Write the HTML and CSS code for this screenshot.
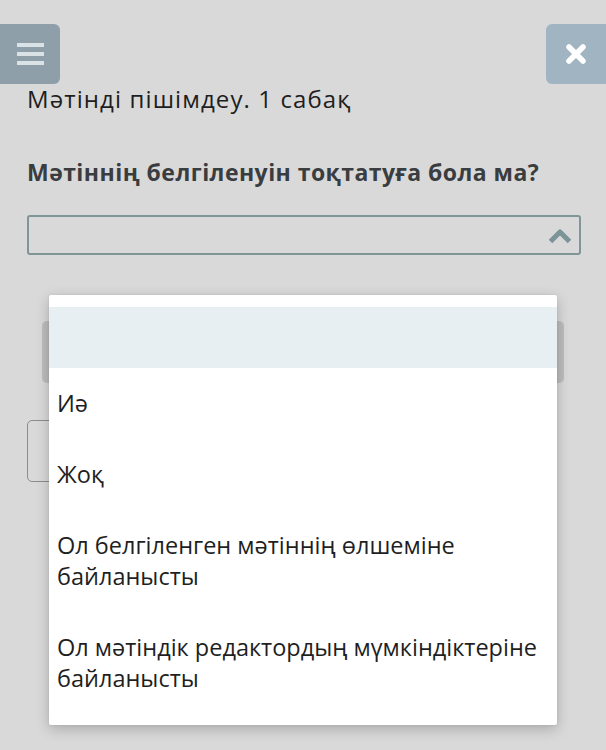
FILE: index.html
```html
<!DOCTYPE html>
<html lang="kk">
<head>
<meta charset="utf-8">
<title>Мәтінді пішімдеу. 1 сабақ</title>
<link rel="stylesheet" href="styles.css">
</head>
<body>
<header class="toolbar">
  <button class="tool-btn menu-btn" aria-label="Мәзір">
    <span class="bar"></span><span class="bar"></span><span class="bar"></span>
  </button>
  <button class="tool-btn close-btn" aria-label="Жабу">
    <svg width="22" height="22" viewBox="0 0 22 22"><path d="M4 4 L18 18 M18 4 L4 18" stroke="#ffffff" stroke-width="5.5" stroke-linecap="round" fill="none"/></svg>
  </button>
</header>
<main class="content">
  <h1 class="title">Мәтінді пішімдеу. 1 сабақ</h1>
  <h2 class="question">Мәтіннің белгіленуін тоқтатуға бола ма?</h2>
  <div class="select-wrap">
    <div class="select">
      <svg class="caret" width="26" height="18" viewBox="0 0 26 18"><path d="M3.5 14.5 L13 5 L22.5 14.5" stroke="#7c9497" stroke-width="5" stroke-linejoin="round" fill="none"/></svg>
    </div>
    <ul class="listbox">
      <li class="option empty active"></li>
      <li class="option">Иә</li>
      <li class="option">Жоқ</li>
      <li class="option">Ол белгіленген мәтіннің өлшеміне байланысты</li>
      <li class="option">Ол мәтіндік редактордың мүмкіндіктеріне байланысты</li>
    </ul>
  </div>
  <div class="submit-btn"></div>
  <div class="outlined-box"></div>
</main>
</body>
</html>
```
FILE: styles.css
```css
html, body {
  margin: 0;
  padding: 0;
}
body {
  background: #d9d9d9;
  font-family: "Open Sans", "Noto Sans", sans-serif;
  color: #222222;
  width: 606px;
  height: 750px;
  overflow: hidden;
  position: relative;
}
.toolbar {
  position: absolute;
  top: 24px;
  left: 0;
  right: 0;
  height: 60px;
  z-index: 2;
}
.tool-btn {
  position: absolute;
  top: 0;
  width: 62px;
  height: 60px;
  border: none;
  padding: 0;
  display: flex;
  align-items: center;
  justify-content: center;
}
.menu-btn {
  left: -2px;
  background: #8e9fa9;
  border-radius: 0 6px 6px 0;
  flex-direction: column;
  gap: 5px;
  padding-left: 2px;
}
.menu-btn .bar {
  display: block;
  width: 27px;
  height: 4px;
  background: #dbe2e6;
}
.close-btn {
  right: -2px;
  background: #a0b4c2;
  border-radius: 6px 0 0 6px;
  padding-right: 2px;
}
.content {
  padding: 83px 25px 0 27px;
}
.title {
  margin: 0;
  font-size: 24px;
  font-weight: 400;
  letter-spacing: 1.1px;
  line-height: 31px;
  color: #1e1e1e;
}
.question {
  margin: 0;
  padding-top: 43px;
  font-size: 23px;
  font-weight: 700;
  letter-spacing: 0.45px;
  line-height: 30px;
  color: #3a3d3f;
}
.select-wrap {
  position: relative;
  margin-top: 28px;
}
.select {
  height: 36px;
  border: 2px solid #7f9596;
  border-radius: 3px;
  display: flex;
  align-items: center;
  justify-content: flex-end;
  padding-right: 6px;
}
.caret {
  display: block;
  margin-top: 2px;
}
.listbox {
  position: absolute;
  top: 80px;
  left: 22px;
  width: 508px;
  margin: 0;
  padding: 12px 0 11px;
  list-style: none;
  background: #ffffff;
  border-radius: 2px;
  box-shadow: 0 4px 14px rgba(0, 0, 0, 0.22), 0 0 3px rgba(0, 0, 0, 0.08);
  z-index: 3;
}
.option {
  padding: 20px 2px 20px 8px;
  font-size: 23.5px;
  line-height: 31px;
  color: #1f1f1f;
}
.option.empty {
  padding: 0;
  height: 61px;
}
.option.active {
  background: #e8eff2;
}
.submit-btn {
  margin: 66px 17px 0 15px;
  height: 62px;
  background: #bdbdbd;
  border-radius: 5px;
}
.outlined-box {
  margin-top: 37px;
  width: 260px;
  height: 60px;
  border: 1.5px solid #8c8c8c;
  border-radius: 5px;
}
```
